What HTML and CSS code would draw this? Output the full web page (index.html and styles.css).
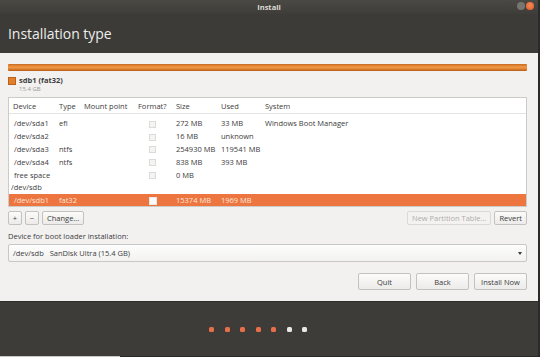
FILE: index.html
```html
<!DOCTYPE html>
<html>
<head>
  <meta charset="UTF-8">
  <title>Install</title>
  <link rel="stylesheet" href="styles.css">
</head>
<body>
  <div class="window">
    <div class="titlebar">
      <span class="title">Install</span>
      <div class="controls">
        <span class="ctl min"></span>
        <span class="ctl close"></span>
      </div>
    </div>
    <div class="header">
      <h1>Installation type</h1>
    </div>

    <div class="content">
      <div class="disk-bar"></div>
      <div class="legend">
        <span class="swatch"></span>
        <div class="legend-text">
          <span class="legend-name">sdb1 (fat32)</span>
          <span class="legend-size">15.4 GB</span>
        </div>
      </div>

      <div class="table-box">
        <table class="parts">
          <thead>
            <tr>
              <th class="c-dev">Device</th>
              <th class="c-type">Type</th>
              <th class="c-mount">Mount point</th>
              <th class="c-fmt">Format?</th>
              <th class="c-size">Size</th>
              <th class="c-used">Used</th>
              <th>System</th>
            </tr>
          </thead>
          <tbody>
            <tr class="first">
              <td class="c-dev">/dev/sda1</td><td>efi</td><td></td>
              <td class="c-fmt"><span class="check"></span></td>
              <td>272 MB</td><td>33 MB</td><td>Windows Boot Manager</td>
            </tr>
            <tr>
              <td class="c-dev">/dev/sda2</td><td></td><td></td>
              <td class="c-fmt"><span class="check"></span></td>
              <td>16 MB</td><td>unknown</td><td></td>
            </tr>
            <tr>
              <td class="c-dev">/dev/sda3</td><td>ntfs</td><td></td>
              <td class="c-fmt"><span class="check"></span></td>
              <td>254930 MB</td><td>119541 MB</td><td></td>
            </tr>
            <tr>
              <td class="c-dev">/dev/sda4</td><td>ntfs</td><td></td>
              <td class="c-fmt"><span class="check"></span></td>
              <td>838 MB</td><td>393 MB</td><td></td>
            </tr>
            <tr>
              <td class="c-dev">free space</td><td></td><td></td>
              <td class="c-fmt"><span class="check"></span></td>
              <td>0 MB</td><td></td><td></td>
            </tr>
            <tr>
              <td class="c-dev disk" colspan="3">/dev/sdb</td>
              <td></td><td></td><td></td><td></td>
            </tr>
            <tr class="selected">
              <td class="c-dev">/dev/sdb1</td><td>fat32</td><td></td>
              <td class="c-fmt"><span class="check"></span></td>
              <td>15374 MB</td><td>1969 MB</td><td></td>
            </tr>
          </tbody>
        </table>
      </div>

      <div class="table-actions">
        <button class="btn small">+</button>
        <button class="btn small">&minus;</button>
        <button class="btn">Change...</button>
        <span class="spacer"></span>
        <button class="btn" disabled>New Partition Table...</button>
        <button class="btn">Revert</button>
      </div>

      <label class="boot-label">Device for boot loader installation:</label>
      <div class="combo">
        <span>/dev/sdb&nbsp;&nbsp;&nbsp;SanDisk Ultra (15.4 GB)</span>
        <span class="arrow"></span>
      </div>

      <div class="nav-buttons">
        <button class="btn nav">Quit</button>
        <button class="btn nav">Back</button>
        <button class="btn nav">Install Now</button>
      </div>
    </div>

    <div class="footer">
      <span class="dot done"></span>
      <span class="dot done"></span>
      <span class="dot done"></span>
      <span class="dot done"></span>
      <span class="dot done"></span>
      <span class="dot"></span>
      <span class="dot"></span>
    </div>
    <div class="bottom-edge"></div>
  </div>
</body>
</html>
```

FILE: styles.css
```css
body {
  margin: 0;
  width: 540px;
  height: 357px;
  overflow: hidden;
  font-family: "Open Sans", "DejaVu Sans", sans-serif;
  background: #2b2a28;
}
.window {
  display: flex;
  flex-direction: column;
  height: 357px;
  width: 538px;
}
.titlebar {
  height: 14px;
  background: linear-gradient(#4a4944, #3e3d39);
  display: flex;
  align-items: center;
  justify-content: center;
  position: relative;
}
.title {
  color: #dfdbd2;
  font-size: 7.5px;
  font-weight: bold;
}
.controls {
  position: absolute;
  right: 4px;
  top: 2px;
  display: flex;
  gap: 1px;
}
.ctl {
  width: 8px;
  height: 8px;
  border-radius: 50%;
  display: inline-block;
}
.ctl.min {
  background: #77756f;
}
.ctl.close {
  background: radial-gradient(circle at 50% 40%, #f3875a, #e25a26);
}
.header {
  height: 39px;
  background: #3c3b37;
  display: flex;
  align-items: center;
  padding-left: 8px;
}
.header h1 {
  margin: 0;
  font-size: 14px;
  font-weight: normal;
  color: #eeeeec;
  letter-spacing: -0.05px;
}
.content {
  flex: 1;
  background: #f2f1f0;
  padding: 11px 11px 0 8px;
  display: flex;
  flex-direction: column;
}
.disk-bar {
  height: 7px;
  background: linear-gradient(#c96a1c, #ef9a48 45%, #e08230 70%, #b95d16);
  border-radius: 1px;
}
.legend {
  display: flex;
  align-items: flex-start;
  gap: 3px;
  margin-top: 5px;
  height: 20px;
}
.swatch {
  width: 6px;
  height: 6px;
  margin-top: 1px;
  background: #e27f2b;
  border: 1px solid #b8621d;
}
.legend-text {
  display: flex;
  flex-direction: column;
  line-height: 9px;
}
.legend-name {
  font-size: 7.5px;
  font-weight: bold;
  color: #3c3c3c;
}
.legend-size {
  font-size: 6px;
  color: #9a9996;
}
.table-box {
  margin-top: 1px;
  background: #fff;
  border: 1px solid #cdcbc8;
  height: 108px;
  overflow: hidden;
}
.parts {
  width: 100%;
  border-collapse: collapse;
  table-layout: fixed;
  font-size: 7.5px;
  color: #3c3c3c;
}
.parts th {
  text-align: left;
  font-weight: normal;
  height: 15px;
  padding: 0 0 0 4px;
  border-bottom: 1px solid #e5e4e2;
  white-space: nowrap;
}
.parts td {
  height: 12.8px;
  padding: 0 0 0 4px;
  white-space: nowrap;
}
.parts tr.first td {
  height: 12.8px;
  padding-top: 3px;
}
.parts .c-dev { width: 42px; }
.parts .c-type { width: 21px; }
.parts .c-mount { width: 50px; }
.parts .c-fmt { width: 34px; }
.parts .c-size { width: 41px; }
.parts .c-used { width: 40px; }
.parts td.c-dev {
  padding-left: 5px;
}
.parts td.disk {
  padding-left: 2px;
}
.parts td.c-fmt {
  padding-left: 15px;
}
.check {
  display: inline-block;
  width: 5px;
  height: 5px;
  border: 1px solid #dcdbd9;
  background: #f4f4f3;
  vertical-align: middle;
}
.parts tr.selected td {
  background: #ed7640;
  color: #fbe5d9;
}
.parts tr.selected .check {
  width: 6px;
  height: 6px;
  background: #fdfdfd;
  border-color: #e8e8e8;
}
.table-actions {
  display: flex;
  gap: 3px;
  margin-top: 4px;
  height: 14px;
}
.spacer {
  flex: 1;
}
.btn {
  font-family: inherit;
  font-size: 7.5px;
  color: #3c3c3c;
  background: linear-gradient(#fbfbfa, #ecebe9);
  border: 1px solid #c4c2bf;
  border-radius: 2px;
  padding: 0 4px;
  height: 14px;
  line-height: 12px;
}
.btn.small {
  width: 14px;
  padding: 0;
}
.btn:disabled {
  color: #aeadab;
  background: #f3f2f1;
  border-color: #dad9d7;
}
.boot-label {
  font-size: 7.5px;
  color: #3c3c3c;
  margin-top: 6px;
  height: 10px;
}
.combo {
  margin-top: 3px;
  height: 16px;
  display: flex;
  align-items: center;
  justify-content: space-between;
  padding: 0 4px 0 4px;
  background: linear-gradient(#fdfdfd, #f3f2f1);
  border: 1px solid #c9c7c4;
  border-radius: 2px;
  font-size: 7.5px;
  color: #3c3c3c;
}
.arrow {
  width: 0;
  height: 0;
  border-left: 2.5px solid transparent;
  border-right: 2.5px solid transparent;
  border-top: 3px solid #3c3c3c;
}
.nav-buttons {
  display: flex;
  justify-content: flex-end;
  gap: 5px;
  margin-top: 11px;
}
.btn.nav {
  width: 53px;
  height: 17px;
  padding: 0;
}
.footer {
  height: 55px;
  background: #3e3c38;
  border-top: 1px solid #2f2e2b;
  display: flex;
  align-items: center;
  justify-content: center;
  gap: 10.5px;
  padding-right: 22px;
  box-sizing: border-box;
}
.dot {
  width: 5px;
  height: 5px;
  border-radius: 1.5px;
  background: #e8e8e6;
}
.dot.done {
  background: #e86f4a;
}
.bottom-edge {
  height: 1px;
  background: linear-gradient(90deg, #c9c8c5 0, #c9c8c5 120px, #2b2a28 120px);
}
```
